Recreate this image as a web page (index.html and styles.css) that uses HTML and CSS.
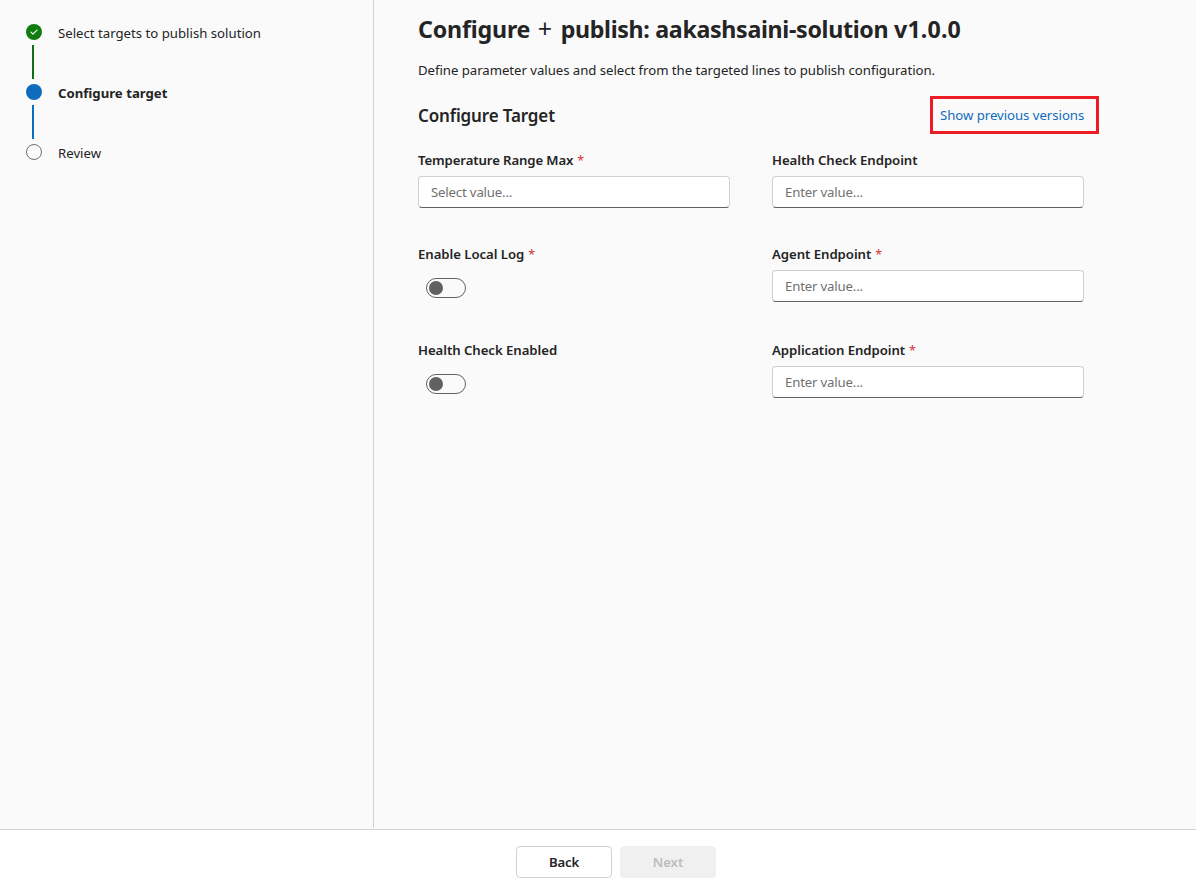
FILE: index.html
```html
<!DOCTYPE html>
<html lang="en">
<head>
<meta charset="utf-8">
<title>Configure + publish</title>
<link rel="stylesheet" href="styles.css">
</head>
<body>
<div class="body">
  <nav class="steps">
    <div class="step">
      <div class="rail">
        <svg class="dot" viewBox="0 0 16 16"><circle cx="8" cy="8" r="8" fill="#107c10"/><path d="M5 8.2l1.9 1.9 4.1-4" fill="none" stroke="#fff" stroke-width="1.1" stroke-linecap="round" stroke-linejoin="round"/></svg>
        <span class="line line-done"></span>
      </div>
      <span class="step-label">Select targets to publish solution</span>
    </div>
    <div class="step">
      <div class="rail">
        <svg class="dot" viewBox="0 0 16 16"><circle cx="8" cy="8" r="8" fill="#0f6cbd"/></svg>
        <span class="line line-current"></span>
      </div>
      <span class="step-label current">Configure target</span>
    </div>
    <div class="step">
      <div class="rail">
        <svg class="dot" viewBox="0 0 16 16"><circle cx="8" cy="8" r="7.5" fill="none" stroke="#707070"/></svg>
      </div>
      <span class="step-label">Review</span>
    </div>
  </nav>
  <main class="main">
    <h1 class="title">Configure <span class="plus">+</span> <span class="name">publish: aakashsaini-solution</span> <span class="version">v1.0.0</span></h1>
    <p class="intro">Define parameter values and select from the targeted lines to publish configuration.</p>
    <div class="section-head">
      <h2 class="subtitle">Configure Target</h2>
      <a class="versions">Show previous versions</a>
    </div>
    <div class="form">
      <div class="field"><label class="label label-wide">Temperature Range Max <i class="req">*</i></label><div class="input">Select value...</div></div>
      <div class="field"><label class="label">Health Check Endpoint</label><div class="input">Enter value...</div></div>
      <div class="field"><label class="label">Enable Local Log <i class="req">*</i></label><div class="switch"><span class="knob"></span></div></div>
      <div class="field"><label class="label">Agent Endpoint <i class="req">*</i></label><div class="input">Enter value...</div></div>
      <div class="field"><label class="label">Health Check Enabled</label><div class="switch"><span class="knob"></span></div></div>
      <div class="field"><label class="label">Application Endpoint <i class="req">*</i></label><div class="input">Enter value...</div></div>
    </div>
  </main>
</div>
<footer class="footer">
  <button class="btn">Back</button>
  <button class="btn btn-off" disabled>Next</button>
</footer>
</body>
</html>
```
FILE: styles.css
```css
* { box-sizing: border-box; }
body { margin: 0; height: 884px; display: flex; flex-direction: column; overflow: hidden; background: #fff; color: #242424; font: 13.2px/20px "Segoe UI", "Noto Sans", sans-serif; }
.body { height: 830px; display: flex; background: #fafafa; border-bottom: 1px solid #d1d1d1; }
.steps { width: 374px; height: 828px; padding: 24px 0 0 26px; border-right: 1px solid #d1d1d1; }
.step { display: flex; gap: 16px; height: 60px; }
.rail { width: 16px; display: flex; flex-direction: column; align-items: center; }
.dot { width: 16px; height: 16px; flex: none; display: block; }
.line { width: 2px; height: 34px; margin: 5px 2px 0 0; }
.line-done { background: #0e700e; }
.line-current { background: #0f6cbd; }
.step-label { white-space: nowrap; line-height: 18px; }
.current { font-weight: 700; }
.main { padding: 13px 0 0 44px; width: 710px; white-space: nowrap; }
.title { margin: 0; font-size: 23.2px; line-height: 32px; font-weight: 700; letter-spacing: -0.17px; }
.plus { font-weight: 400; font-size: 25px; line-height: 1; margin: 0 3px 0 1.5px; }
.name { letter-spacing: -0.32px; }
.version { letter-spacing: 0.15px; }
.intro { margin: 15px 0 0; letter-spacing: -0.04px; }
.section-head { margin-top: 16px; height: 38px; display: flex; justify-content: space-between; align-items: center; }
.subtitle { margin: 2px 0 0; font-size: 17px; font-weight: 600; letter-spacing: -0.14px; }
.versions { width: 169px; height: 38px; margin-right: -15px; border: 3px solid #ed1c24; color: #0f6cbd; line-height: 32px; padding-left: 7px; letter-spacing: -0.04px; }
.form { margin-top: 16px; display: grid; grid-template-columns: 312px 312px; column-gap: 42px; grid-template-rows: 94px 96px 58px; }
.label { display: block; height: 26px; font-weight: 600; letter-spacing: -0.05px; }
.label-wide { letter-spacing: -0.12px; }
.req { font-style: normal; font-weight: 400; font-size: 12.5px; color: #d13438; margin-left: 0.5px; }
.input { height: 32px; border: 1px solid #d1d1d1; border-bottom-color: #616161; border-radius: 4px; background: #fff; color: #707070; line-height: 30px; padding-left: 12px; letter-spacing: -0.17px; }
.switch { width: 40px; height: 20px; margin: 8px 0 0 8px; border: 1px solid #616161; border-radius: 10px; padding: 2px; }
.knob { display: block; width: 14px; height: 14px; border-radius: 50%; background: #616161; }
.footer { height: 54px; padding: 16px 0 0 516px; display: flex; gap: 8px; }
.btn { width: 96px; height: 32px; border: 1px solid #d1d1d1; border-radius: 4px; background: #fff; font: inherit; font-weight: 600; letter-spacing: -0.2px; color: #242424; }
.btn-off { background: #f0f0f0; border-color: #f0f0f0; color: #bdbdbd; letter-spacing: 0; }
```
